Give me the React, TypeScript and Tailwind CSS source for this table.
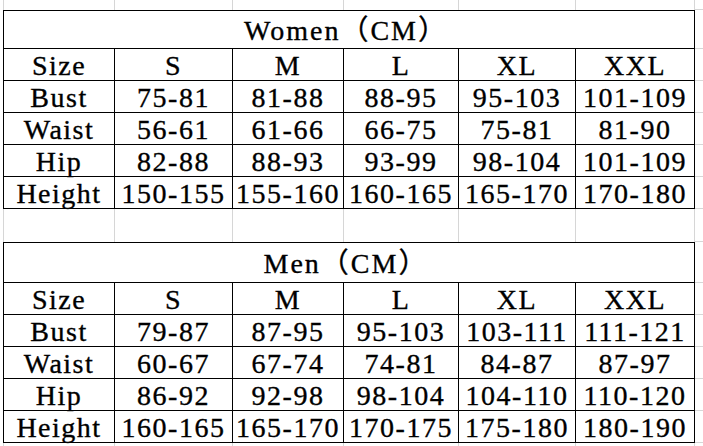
const colW = ['w-[111px]', 'w-[118px]', 'w-[111px]', 'w-[115px]', 'w-[117px]', 'w-[119px]'];

const women = [
  ['Size', 'S', 'M', 'L', 'XL', 'XXL'],
  ['Bust', '75-81', '81-88', '88-95', '95-103', '101-109'],
  ['Waist', '56-61', '61-66', '66-75', '75-81', '81-90'],
  ['Hip', '82-88', '88-93', '93-99', '98-104', '101-109'],
  ['Height', '150-155', '155-160', '160-165', '165-170', '170-180'],
];

const men = [
  ['Size', 'S', 'M', 'L', 'XL', 'XXL'],
  ['Bust', '79-87', '87-95', '95-103', '103-111', '111-121'],
  ['Waist', '60-67', '67-74', '74-81', '84-87', '87-97'],
  ['Hip', '86-92', '92-98', '98-104', '104-110', '110-120'],
  ['Height', '160-165', '165-170', '170-175', '175-180', '180-190'],
];

// empty spreadsheet cells, only the faint grid lines
function Strip({ h }: { h: string }) {
  return (
    <div className={`flex ${h}`}>
      <div className="w-[4px] border-r border-[#d6d6d6]" />
      {colW.map((w, i) => (
        <div key={i} className={`${w} border-r border-[#d6d6d6]`} />
      ))}
      <div className="flex-1 border-b border-[#d6d6d6]" />
    </div>
  );
}

function SizeTable({ title, rows, titleH }: { title: string; rows: string[][]; titleH: string }) {
  return (
    <div>
      <div className="flex">
        <div className="w-[3px]" />
        <div className={`w-[692px] ${titleH} border border-black flex items-center justify-center pt-[3px] pr-[6px] tracking-[2px]`}>
          {title}
        </div>
        <div className="flex-1 border-b border-[#d6d6d6]" />
      </div>
      {rows.map((r, i) => (
        <div key={i} className="flex">
          <div className="w-[3px]" />
          <div className="flex border-l border-black">
            {r.map((c, j) => (
              <div
                key={j}
                className={`${colW[j]} h-[32px] border-r border-b border-black flex items-center justify-center pt-[3px]`}
              >
                {c}
              </div>
            ))}
          </div>
          <div className="flex-1 border-b border-[#d6d6d6]" />
        </div>
      ))}
    </div>
  );
}

export default function App() {
  return (
    <div
      className="w-[703px] h-[446px] bg-white text-black overflow-hidden text-[28px] leading-none tracking-[1.5px] [-webkit-text-stroke:0.35px_black]"
      style={{ fontFamily: '"Liberation Serif", "Noto Sans CJK SC", serif' }}
    >
      <Strip h="h-[10px]" />
      <SizeTable title="Women（CM）" rows={women} titleH="h-[39px]" />
      <Strip h="h-[33px]" />
      <SizeTable title="Men（CM）" rows={men} titleH="h-[41px]" />
      <Strip h="h-[10px]" />
    </div>
  );
}
